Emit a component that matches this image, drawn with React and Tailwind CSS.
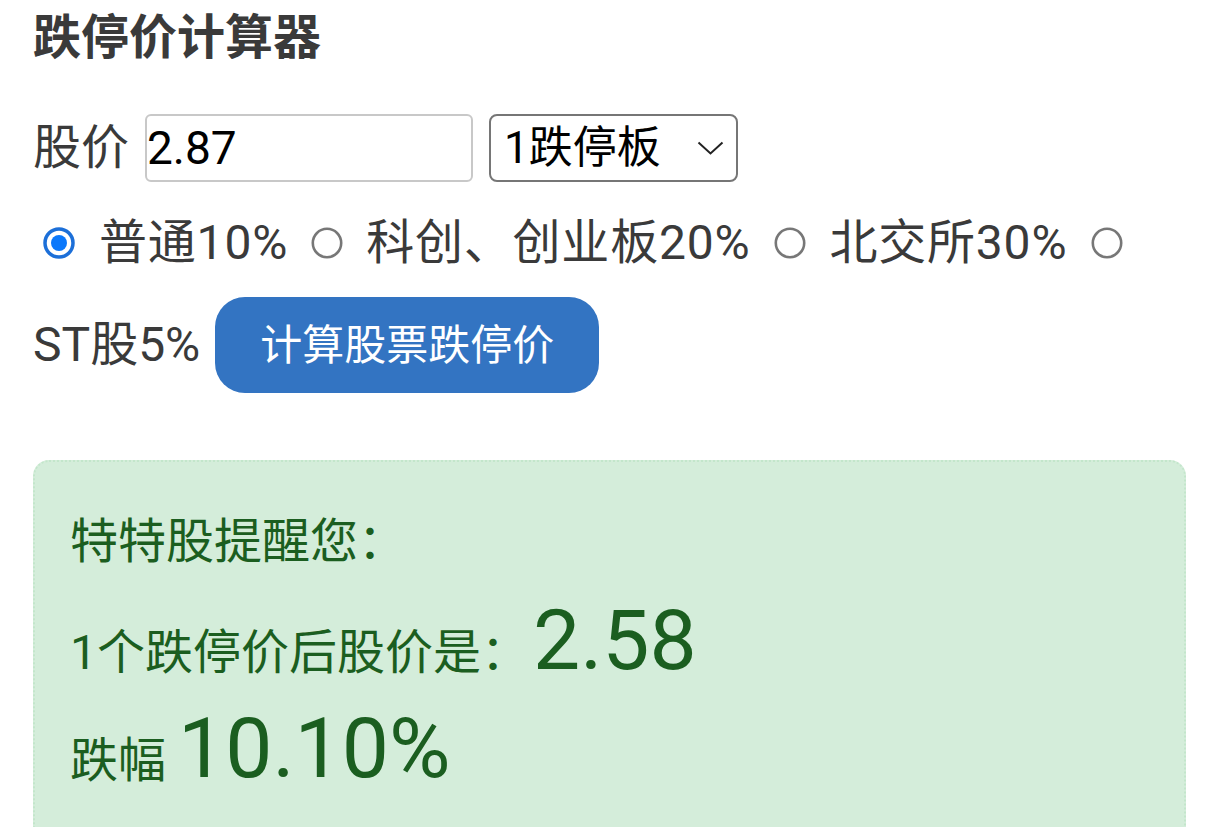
import React from "react";

const FONT = { fontFamily: 'Roboto, "Noto Sans CJK SC", sans-serif' };

function RadioChecked({ className = "" }) {
  return (
    <svg className={className} width="32" height="32" viewBox="0 0 32 32">
      <circle cx="16" cy="16" r="14" fill="#ffffff" stroke="#1c6fd8" strokeWidth="3.5" />
      <circle cx="16" cy="16" r="8" fill="#0b78fb" />
    </svg>
  );
}

function RadioEmpty({ className = "" }) {
  return (
    <svg className={className} width="32" height="32" viewBox="0 0 32 32">
      <circle cx="16" cy="16" r="14.2" fill="#ffffff" stroke="#777777" strokeWidth="2.6" />
    </svg>
  );
}

export default function App() {
  return (
    <div style={FONT} className="bg-white pl-[33px] pr-[30px] pt-[2px] text-[#3a3a3a]">
      <h1 className="text-[48px] font-bold leading-[72px]">跌停价计算器</h1>

      <div className="mt-[40px] flex h-[68px] items-center">
        <span className="text-[48px] leading-[68px]">股价</span>
        <div className="ml-[16px] flex h-[68px] w-[328px] items-center rounded-[6px] border-2 border-[#c8c8c8] pl-[0px] text-[46px] text-black">
          2.87
        </div>
        <div className="ml-[16px] flex h-[68px] w-[249px] items-center justify-between rounded-[8px] border-2 border-[#767676] pl-[13px] pr-[12px] text-[44px] text-black">
          <span>1跌停板</span>
          <svg width="27" height="14" viewBox="0 0 27 14" fill="none">
            <path d="M1.5 1.5 L13.5 12.5 L25.5 1.5" stroke="#222" strokeWidth="2" />
          </svg>
        </div>
      </div>

      <div className="mt-[25px] flex h-[72px] items-center text-[48px] leading-[72px]">
        <RadioChecked className="ml-[10px]" />
        <span className="ml-[24px] tracking-[0.8px]">普通10%</span>
        <RadioEmpty className="ml-[23px]" />
        <span className="ml-[23px] tracking-[0.8px]">科创、创业板20%</span>
        <RadioEmpty className="ml-[24px]" />
        <span className="ml-[23px] tracking-[0.8px]">北交所30%</span>
        <RadioEmpty className="ml-[24px]" />
      </div>

      <div className="mt-[18px] flex h-[96px] items-center">
        <span className="text-[48px] leading-[72px]">ST股5%</span>
        <button className="ml-[15px] flex h-[96px] items-center rounded-[30px] bg-[#3374c2] px-[45px] text-[42px] text-white">
          计算股票跌停价
        </button>
      </div>

      <div className="mt-[67px] rounded-[16px] border-2 border-dotted border-[#c3e6cb] bg-[#d4edda] pb-[40px] pl-[35px] pt-[44px] text-[#1b5e20]">
        <div className="text-[48px] leading-[72px]">特特股提醒您：</div>
        <div className="mt-[8px] flex h-[110px] items-baseline leading-[110px]">
          <span className="text-[48px]">1个跌停价后股价是：</span>
          <span className="ml-[4px] text-[84px]">2.58</span>
        </div>
        <div className="-mt-[2px] flex h-[110px] items-baseline leading-[110px]">
          <span className="text-[48px]">跌幅</span>
          <span className="ml-[12px] text-[84px]">10.10%</span>
        </div>
      </div>
    </div>
  );
}
